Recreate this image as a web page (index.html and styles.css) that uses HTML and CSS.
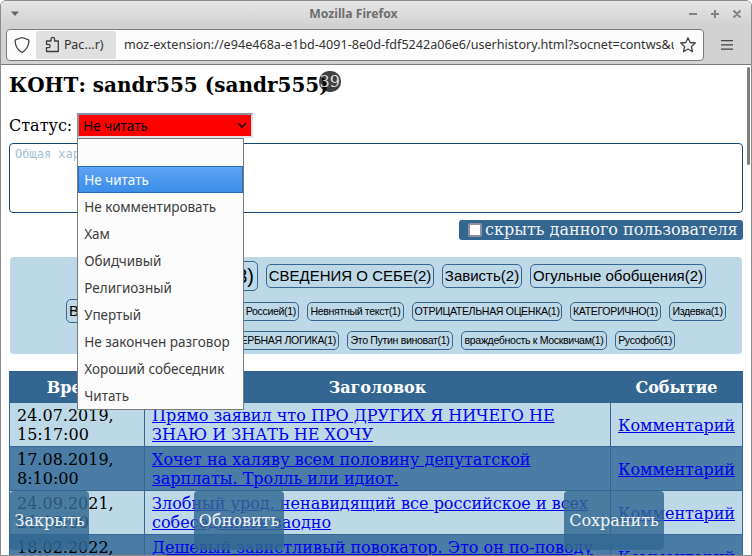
FILE: index.html
```html
<!DOCTYPE html>
<html lang="ru">
<head>
<meta charset="utf-8">
<title>Mozilla Firefox</title>
<link rel="stylesheet" href="styles.css">
</head>
<body>
<div class="window">
  <header class="titlebar">
    <svg class="menu-arrow" width="8" height="6" viewBox="0 0 8 6"><path d="M0 .5h8L4 5z" fill="#666"/></svg>
    <span class="title">Mozilla Firefox</span>
    <svg class="controls" width="56" height="12" viewBox="0 0 56 12" stroke="#838383" stroke-width="2" fill="none"><path d="M2 6h8M24 6h8M28 2v8M46.500 2.500l7 7M53.500 2.500l-7 7"/></svg>
  </header>
  <div class="toolbar">
    <div class="urlbar">
      <svg class="shield" width="16" height="18" viewBox="0 0 16 18" fill="none" stroke="#444" stroke-width="1.300" stroke-linejoin="round"><path d="M8 1.500l6 2.200c.8.300 1 .8.900 1.600C14.500 10.500 12.500 14 8 16.500 3.500 14 1.500 10.500 1.100 5.300 1 4.500 1.200 4 2 3.700z"/></svg>
      <div class="identity">
        <svg width="15" height="17" viewBox="0 0 15 17" fill="none" stroke="#3c3c3c" stroke-width="1.300" stroke-linejoin="round"><path d="M1.500 15.500V11.600H3.500a1.600 1.600 0 0 0 0-3.200H1.500V5H6V3.200a1.800 1.800 0 0 1 3.600 0V5h3.700v10.500z"/></svg>
        <span>Рас...r)</span>
      </div>
      <span class="address">moz-extension://e94e468a-e1bd-4091-8e0d-fdf5242a06e6/userhistory.html?socnet=contws&amp;u</span>
      <svg class="star" width="18" height="18" viewBox="0 0 18 18" fill="none" stroke="#444" stroke-width="1.300" stroke-linejoin="round"><path d="M9 1.800l2.100 4.700 5.200.5-3.900 3.500 1.100 5.200L9 13l-4.500 2.700 1.100-5.200L1.700 7l5.200-.5z"/></svg>
    </div>
    <svg class="burger" width="12" height="10" viewBox="0 0 12 10" fill="#444"><path d="M0 0h12v1.200H0zM0 4.300h12v1.200H0zM0 8.600h12v1.200H0z"/></svg>
  </div>

  <main class="page">
    <h1 class="heading">КОНТ: sandr555 (sandr555)<span class="badge">39</span></h1>
    <div class="status">
      <span>Статус:</span>
      <div class="select">
        <span>Не читать</span>
        <svg width="10" height="7" viewBox="0 0 10 7" fill="none" stroke="#111" stroke-width="1.600"><path d="M1.200 1.200L5 5l3.800-3.800"/></svg>
        <ul class="menu">
          <li></li>
          <li class="active">Не читать</li>
          <li>Не комментировать</li>
          <li>Хам</li>
          <li>Обидчивый</li>
          <li>Религиозный</li>
          <li>Упертый</li>
          <li>Не закончен разговор</li>
          <li>Хороший собеседник</li>
          <li>Читать</li>
        </ul>
      </div>
    </div>
    <div class="note">Общая характеристика</div>
    <div class="hide-row"><label class="hide"><span class="box"></span><span class="hide-text">скрыть данного пользователя</span></label></div>

    <section class="cloud">
      <div class="tags first">
        <span class="tag large first-tag">(3)</span>
        <span class="tag medium w168">СВЕДЕНИЯ О СЕБЕ(2)</span>
        <span class="tag medium w80">Зависть(2)</span>
        <span class="tag medium w176">Огульные обобщения(2)</span>
      </div>
      <div class="tags second">
        <span class="tag medium second-tag">В</span>
        <span class="tag russia">Россией(1)</span>
        <span class="tag w97">Невнятный текст(1)</span>
        <span class="tag w150">ОТРИЦАТЕЛЬНАЯ ОЦЕНКА(1)</span>
        <span class="tag w91">КАТЕГОРИЧНО(1)</span>
        <span class="tag w57">Издевка(1)</span>
      </div>
      <div class="tags third">
        <span class="tag logic">УЩЕРБНАЯ ЛОГИКА(1)</span>
        <span class="tag w106">Это Путин виноват(1)</span>
        <span class="tag w146">враждебность к Москвичам(1)</span>
        <span class="tag w60">Русофоб(1)</span>
      </div>
    </section>

    <table class="history">
      <colgroup><col class="c-time"><col class="c-title"><col class="c-event"></colgroup>
      <thead><tr><th>Время</th><th>Заголовок</th><th>Событие</th></tr></thead>
      <tbody>
        <tr><td>24.07.2019,<br>15:17:00</td><td><a href="#">Прямо заявил что ПРО ДРУГИХ Я НИЧЕГО НЕ<br>ЗНАЮ И ЗНАТЬ НЕ ХОЧУ</a></td><td class="event"><a href="#">Комментарий</a></td></tr>
        <tr><td>17.08.2019,<br>8:10:00</td><td><a href="#">Хочет на халяву всем половину депутатской<br>зарплаты. Тролль или идиот.</a></td><td class="event"><a href="#">Комментарий</a></td></tr>
        <tr><td>24.09.2021,<br>21:18:00</td><td><a href="#">Злобный урод, ненавидящий все российское и всех<br>собеседников заодно</a></td><td class="event"><a href="#">Комментарий</a></td></tr>
        <tr><td>18.02.2022,<br>&nbsp;</td><td><a href="#">Дешевый завистливый повокатор. Это он по-поводу</a><br>&nbsp;</td><td class="event"><a href="#">Комментарий</a></td></tr>
      </tbody>
    </table>
  </main>
  <div class="scrollbar"></div>
  <div class="action close">Закрыть</div>
  <div class="action refresh">Обновить</div>
  <div class="action save">Сохранить</div>
</div>
</body>
</html>
```
FILE: styles.css
```css
* { box-sizing: border-box; }
html, body { margin: 0; height: 556px; overflow: hidden; background: #fff; }
.window {
  position: relative; width: 752px; height: 556px; overflow: hidden;
  border: 1px solid #8c8c8c; border-radius: 6px 6px 0 0; background: #fff;
  font: 16px/19px "DejaVu Serif", serif; color: #000;
}
.titlebar {
  height: 24px; display: flex; align-items: center; justify-content: space-between;
  padding: 1px 8px 0 10px; background: linear-gradient(#e6e6e6, #d2d2d2);
  font: bold 12.2px/16px "Noto Sans", sans-serif; color: #6e6e6e;
}
.title { margin-left: 1px; }
.toolbar {
  height: 40px; display: flex; align-items: center; background: #d2d2d2;
  border-bottom: 1px solid #7d7d7d; padding: 0 17px 0 5px;
}
.urlbar {
  width: 698px; height: 32px; flex: none; display: flex; align-items: center;
  background: #fcfcfc; border: 1px solid #7b7b7b; border-radius: 4px; padding-left: 7px;
  font: 12.6px/20px "Noto Sans", sans-serif; color: #333;
}
.shield { margin-right: 6px; }
.identity {
  width: 80px; height: 28px; display: flex; align-items: center; gap: 4px;
  padding-left: 9px; background: #e0e0e0; border-radius: 3px;
}
.address { width: 550px; margin-left: 8px; white-space: nowrap; overflow: hidden; flex: none; }
.star { margin-left: 5px; flex: none; }
.burger { margin-left: auto; margin-right: 1px; }
.page { padding: 0 8px; height: 490px; overflow: hidden; }
.heading { margin: 7px 0 0; height: 26px; font-size: 20px; line-height: 26px; font-weight: bold; white-space: nowrap; display: flex; }
.badge {
  position: relative; top: -1px; margin-left: -10px; width: 22px; height: 21px; border-radius: 10px;
  background: rgba(0,0,0,.75); color: #ddd; font-size: 16px; font-weight: normal;
  line-height: 21px; text-align: center;
}
.status { display: flex; align-items: center; gap: 5px; margin-top: 15px; height: 25px; }
.select {
  position: relative; width: 176px; height: 25px; display: flex; align-items: center; justify-content: space-between;
  border: 2px solid; border-color: #8f8f9d #e3e3e3 #e3e3e3 #8f8f9d; background: #f00;
  padding: 0 4px 0 4px; font: 13.5px/18px "Noto Sans", sans-serif; color: #000;
}
.menu {
  position: absolute; z-index: 5; left: -2px; top: 23px; width: 167px; height: 272px; margin: 0; padding: 0;
  list-style: none; background: #fcfcfc; border: 1px solid #7b7b7b; color: #3c3c3c;
}
.menu li { height: 27px; line-height: 28px; padding-left: 6px; white-space: nowrap; }
.menu .active { color: #f5f9ff; background: linear-gradient(#5ea5f7, #3a8de6); box-shadow: inset 0 0 0 1px #2b6cb8; }
.note {
  height: 70px; margin-top: 5px; border: 1px solid #154a78; border-radius: 4px;
  padding: 3px 5px; font: 12px/14px "DejaVu Sans Mono", monospace; color: #a4bdd2;
}
.hide-row { display: flex; justify-content: flex-end; margin-top: 7px; }
.hide { width: 284px; height: 20px; display: flex; align-items: center; gap: 3px; padding-left: 9px; border-radius: 3px; background: #336791; color: #f4f4f4; white-space: nowrap; }
.hide-text { padding-bottom: 2px; }
.box { width: 14px; height: 14px; background: #fff; border: 2px solid #8f8f9d; border-radius: 2px; }
.cloud {
  height: 97px; margin: 17px 1px 0; padding-top: 4px; border-radius: 4px; background: #bdd9e7;
  font: 10.6px/17px "Liberation Sans", sans-serif;
}
.tags { display: flex; align-items: center; gap: 8px; height: 30px; }
.tag { height: 19px; border: 1px solid #336791; border-radius: 5px; text-align: center; white-space: nowrap; overflow: hidden; flex: none; letter-spacing: -.35px; }
.medium { height: 24px; font-size: 15px; line-height: 22px; letter-spacing: 0; }
.large { height: 30px; font-size: 20px; line-height: 28px; letter-spacing: 0; }
.first { padding-left: 76px; }
.first-tag { width: 172px; text-align: right; padding-right: 3px; }
.second { padding-left: 56px; margin-top: 5px; }
.second-tag { width: 60px; text-align: left; padding-left: 2px; }
.russia { width: 165px; text-align: right; padding-right: 2px; }
.third { padding-left: 107px; margin-top: -1px; }
.logic { width: 222px; text-align: right; padding-right: 2px; }
.w168 { width: 168px; } .w80 { width: 80px; } .w176 { width: 176px; }
.w97 { width: 97px; } .w150 { width: 150px; } .w91 { width: 91px; } .w57 { width: 57px; }
.w106 { width: 106px; } .w146 { width: 146px; } .w60 { width: 60px; }
.history { width: 734px; margin-top: 17px; table-layout: fixed; border-collapse: collapse; }
.c-time { width: 135px; } .c-title { width: 466px; }
.history th { height: 31px; padding: 0; border: 1px solid #336791; background: #336791; color: #fff; }
.history td { height: 44px; padding: 3px 0 2px 7px; border: 1px solid #336791; background: #bdd9e7; white-space: nowrap; overflow: hidden; }
.history .event { padding: 3px 0 2px 7px; }
.history tr:nth-child(even) td { background: #4a7ca5; }
.history a { color: #00e; }
.scrollbar { position: absolute; right: 1px; top: 66px; width: 3px; height: 98px; border-radius: 2px; background: #7d7d7a; }
.action { position: absolute; top: 490px; height: 59px; border-radius: 4px; background: rgba(51,103,145,.83); color: #f2f5f8; text-align: center; line-height: 59px; }
.close { left: 9px; width: 79px; }
.refresh { left: 193px; width: 90px; }
.save { left: 563px; width: 100px; }
```
